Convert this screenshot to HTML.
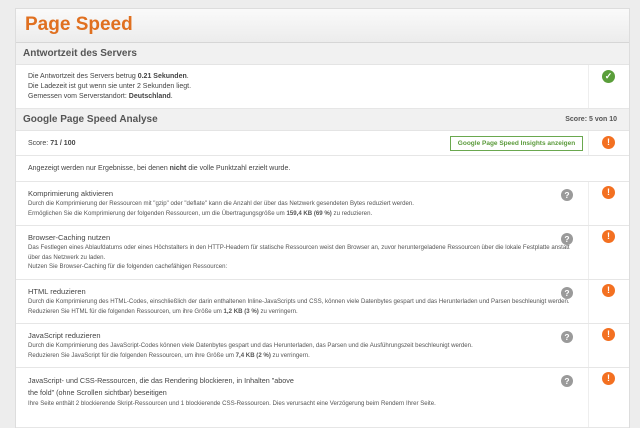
<!DOCTYPE html>
<html><head><meta charset="utf-8"><style>
*{margin:0;padding:0;box-sizing:border-box}
body{width:640px;height:400px;overflow:hidden;background:#ededed;font-family:"Liberation Sans",sans-serif;color:#444;position:relative}
.panel{position:absolute;left:15px;top:8px;width:615px;height:420px;background:#fff;border:1px solid #ddd}
.title{height:34px;background:linear-gradient(#fafafa,#ececec);border-bottom:1px solid #d6d6d6;padding-left:9px;color:#e07020;font-size:19px;font-weight:bold;line-height:32px}
.sh{height:22px;background:#f1f1f1;border-bottom:1px solid #e4e4e4;padding-left:7px;font-size:10px;font-weight:bold;color:#555;line-height:22px;position:relative}
.row{position:relative;border-bottom:1px solid #e6e6e6}
.row .c{position:absolute;left:572px;top:0;bottom:0;border-left:1px solid #eee;width:43px}
.t{font-size:7px;line-height:10px;padding-left:12px}
.it{font-size:7.5px;color:#444}
.d{font-size:6.1px;line-height:9.5px;color:#555}
.ic{position:absolute;width:13px;height:13px;border-radius:50%;color:#fff;font-size:9px;font-weight:bold;text-align:center;line-height:13px}
.ex{background:#f37021;left:586px}
.q{background:#9a9a9a;left:545px;width:12px;height:12px;line-height:12px;font-size:8.5px}
</style></head><body>
<div class="panel">
<div class="title">Page Speed</div>
<div class="sh">Antwortzeit des Servers</div>
<div class="row" style="height:44px"><div class="c"></div>
<div class="t" style="padding-top:7px">Die Antwortzeit des Servers betrug <b>0.21 Sekunden</b>.<br>Die Ladezeit ist gut wenn sie unter 2 Sekunden liegt.<br>Gemessen vom Serverstandort: <b>Deutschland</b>.</div>
<div class="ic" style="background:#5a9e3a;left:586px;top:5px">✓</div></div>
<div class="sh">Google Page Speed Analyse<span style="position:absolute;right:12px;font-size:7px">Score: 5 von 10</span></div>
<div class="row" style="height:25px"><div class="c"></div>
<div class="t" style="padding-top:8px">Score: <b>71 / 100</b></div>
<div style="position:absolute;left:434px;top:5px;width:133px;height:15px;border:1px solid #6aa84f;color:#5a9a3a;font-size:6.5px;font-weight:bold;text-align:center;line-height:13px">Google Page Speed Insights anzeigen</div>
<div class="ic ex" style="top:5px">!</div></div>
<div class="row" style="height:26px"><div class="t" style="padding-top:8px">Angezeigt werden nur Ergebnisse, bei denen <b>nicht</b> die volle Punktzahl erzielt wurde.</div></div>
<div class="row" style="height:44px"><div class="c"></div>
<div class="t" style="padding-top:7px"><div class="it">Komprimierung aktivieren</div><div class="d">Durch die Komprimierung der Ressourcen mit "gzip" oder "deflate" kann die Anzahl der über das Netzwerk gesendeten Bytes reduziert werden.<br>Ermöglichen Sie die Komprimierung der folgenden Ressourcen, um die Übertragungsgröße um <b>159,4 KB (69 %)</b> zu reduzieren.</div></div>
<div class="ic q" style="top:7px">?</div><div class="ic ex" style="top:4px">!</div></div>
<div class="row" style="height:54px"><div class="c"></div>
<div class="t" style="padding-top:7px"><div class="it">Browser-Caching nutzen</div><div class="d" style="padding-right:50px">Das Festlegen eines Ablaufdatums oder eines Höchstalters in den HTTP-Headern für statische Ressourcen weist den Browser an, zuvor heruntergeladene Ressourcen über die lokale Festplatte anstatt<br>über das Netzwerk zu laden.<br>Nutzen Sie Browser-Caching für die folgenden cachefähigen Ressourcen:</div></div>
<div class="ic q" style="top:7px">?</div><div class="ic ex" style="top:4px">!</div></div>
<div class="row" style="height:44px"><div class="c"></div>
<div class="t" style="padding-top:7px"><div class="it">HTML reduzieren</div><div class="d">Durch die Komprimierung des HTML-Codes, einschließlich der darin enthaltenen Inline-JavaScripts und CSS, können viele Datenbytes gespart und das Herunterladen und Parsen beschleunigt werden.<br>Reduzieren Sie HTML für die folgenden Ressourcen, um ihre Größe um <b>1,2 KB (3 %)</b> zu verringern.</div></div>
<div class="ic q" style="top:7px">?</div><div class="ic ex" style="top:4px">!</div></div>
<div class="row" style="height:44px"><div class="c"></div>
<div class="t" style="padding-top:7px"><div class="it">JavaScript reduzieren</div><div class="d">Durch die Komprimierung des JavaScript-Codes können viele Datenbytes gespart und das Herunterladen, das Parsen und die Ausführungszeit beschleunigt werden.<br>Reduzieren Sie JavaScript für die folgenden Ressourcen, um ihre Größe um <b>7,4 KB (2 %)</b> zu verringern.</div></div>
<div class="ic q" style="top:7px">?</div><div class="ic ex" style="top:4px">!</div></div>
<div class="row" style="height:60px"><div class="c"></div>
<div class="t" style="padding-top:7px"><div class="it" style="line-height:12px;font-size:7.2px">JavaScript- und CSS-Ressourcen, die das Rendering blockieren, in Inhalten "above<br>the fold" (ohne Scrollen sichtbar) beseitigen</div><div class="d">Ihre Seite enthält 2 blockierende Skript-Ressourcen und 1 blockierende CSS-Ressourcen. Dies verursacht eine Verzögerung beim Rendern Ihrer Seite.</div></div>
<div class="ic q" style="top:7px">?</div><div class="ic ex" style="top:4px">!</div></div>
</div>
</body></html>
